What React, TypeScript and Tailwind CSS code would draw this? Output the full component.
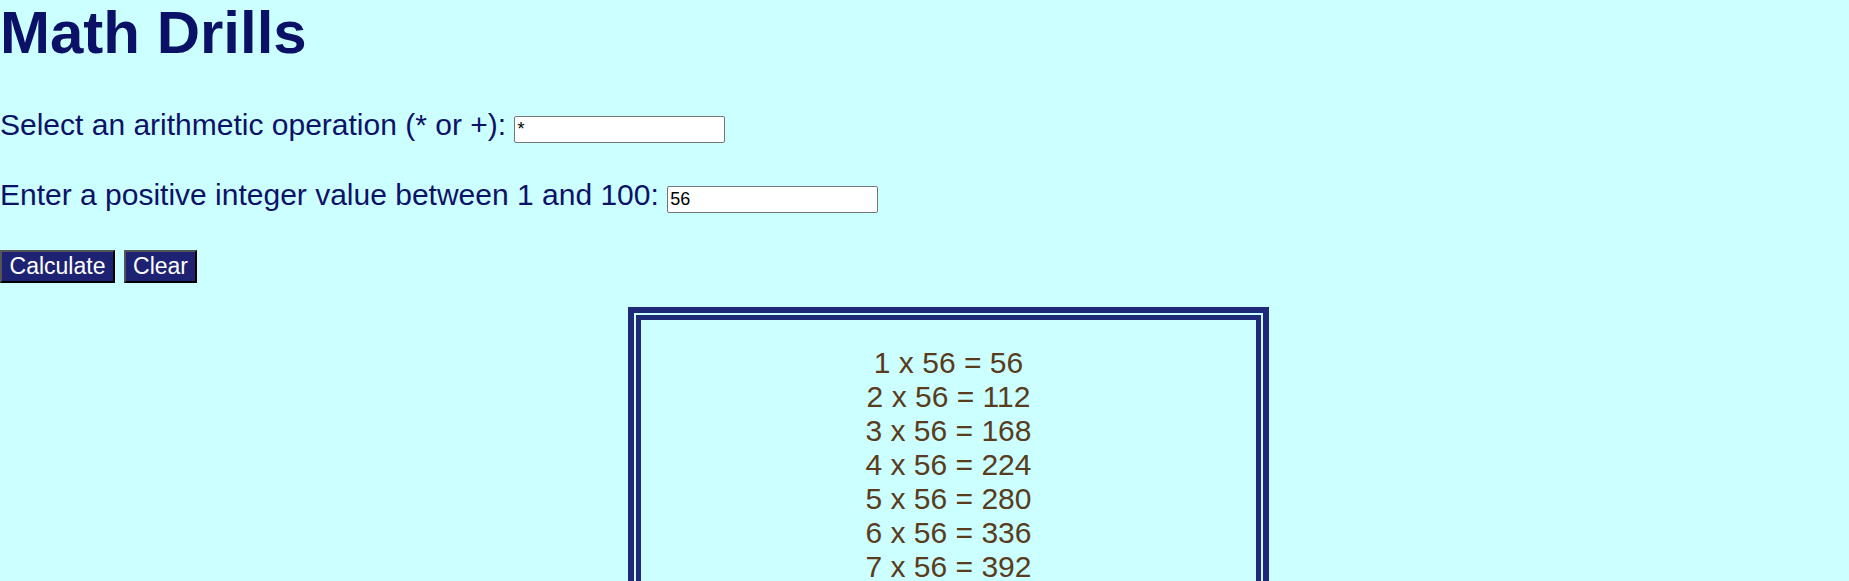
import React from "react";

const rows = Array.from({ length: 10 }, (_, i) => i + 1);

const App = () => {
  const value = 56;
  return (
    <div className="min-h-screen w-full bg-[#ccffff] font-['Liberation_Sans',Arial,sans-serif] text-[#0c1268] overflow-hidden">
      <h1 className="text-[60px] leading-[66px] font-bold text-[#0b1166] mb-[41px]">
        Math Drills
      </h1>

      <p className="text-[30px] leading-[35px]">
        Select an arithmetic operation (* or +):{" "}
        <input
          type="text"
          defaultValue="*"
          className="w-[211px] h-[27px] px-[2px] text-[18px] text-black bg-white border border-[#767676] rounded-[2px] align-baseline"
        />
      </p>

      <p className="text-[30px] leading-[35px] mt-[34px]">
        Enter a positive integer value between 1 and 100:{" "}
        <input
          type="text"
          defaultValue={String(value)}
          className="w-[211px] h-[27px] px-[2px] text-[18px] text-black bg-white border border-[#767676] rounded-[2px] align-baseline"
        />
      </p>

      <div className="flex gap-[9px] mt-[37px]">
        <button className="w-[115px] h-[33px] bg-[#1e2272] text-white text-[23px] leading-none border-2 border-t-[#555555] border-l-[#555555] border-r-black border-b-black">
          Calculate
        </button>
        <button className="w-[73px] h-[33px] bg-[#1e2272] text-white text-[23px] leading-none border-2 border-t-[#555555] border-l-[#555555] border-r-black border-b-black">
          Clear
        </button>
      </div>

      <div className="mt-[24px] ml-[628px] w-[641px] border-[6px] border-[#1e2a78] p-[2px]">
        <div className="border-[5px] border-[#1e2a78] pt-[26px] pb-[25px] text-center text-[30px] leading-[34px] text-[#593c1d]">
          {rows.map((n) => (
            <div key={n}>
              {n} x {value} = {n * value}
            </div>
          ))}
        </div>
      </div>
    </div>
  );
};

export default App;
